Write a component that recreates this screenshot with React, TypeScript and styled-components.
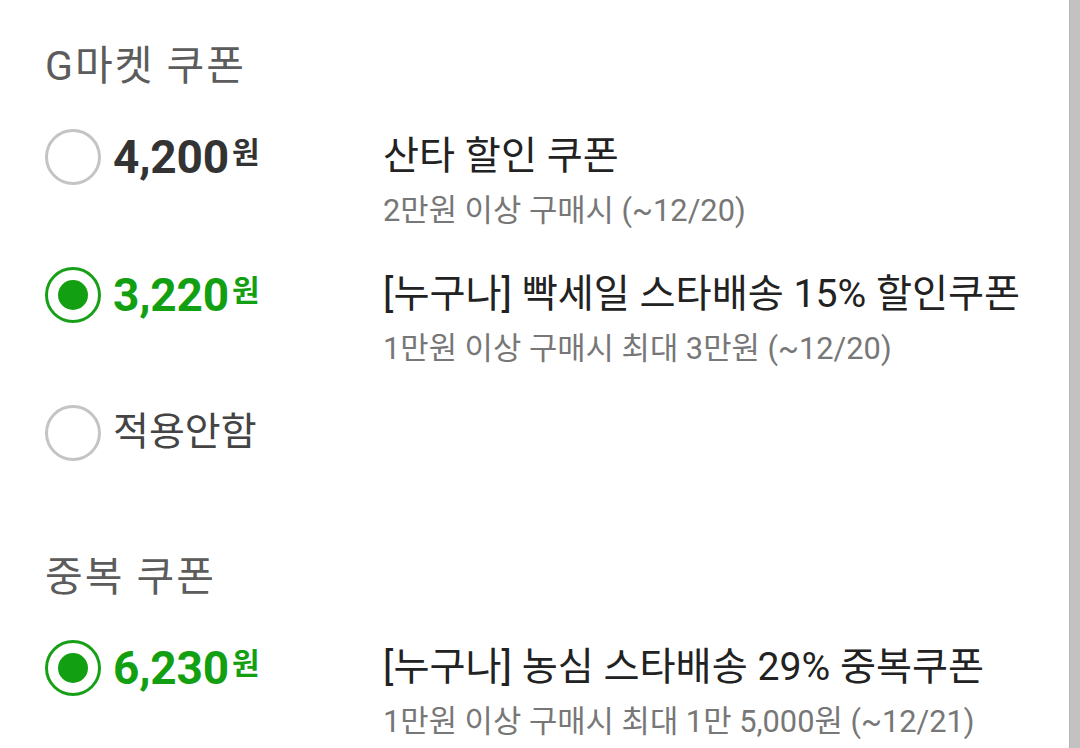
import styled, { createGlobalStyle } from "styled-components";

const GlobalStyle = createGlobalStyle`
    html, body {
        margin: 0;
        padding: 0;
        background: #ffffff;
    }
    body {
        font-family: Roboto, "Noto Sans CJK KR", sans-serif;
        -webkit-font-smoothing: antialiased;
    }
`;

const Screen = styled.div`
    display: flex;
    width: 1080px;
    height: 748px;
    overflow: hidden;
    background: #fff;
`;

const Content = styled.main`
    flex: 1;
    padding: 41px 0 0 45px;
`;

const Scrollbar = styled.div`
    width: 10px;
    border-left: 1px solid #b5b5b5;
    background: #c2c2c2;
`;

const Section = styled.section<{ $spaced?: boolean }>`
    display: flex;
    flex-direction: column;
    margin-top: ${({ $spaced }) => ($spaced ? "92px" : "0")};
`;

const Heading = styled.h2`
    margin: 0 0 38px;
    font-size: 41px;
    line-height: 50px;
    font-weight: 400;
    letter-spacing: 2px;
    color: #5c5c5c;
`;

const List = styled.div`
    display: flex;
    flex-direction: column;
    gap: 29px;
`;

const Row = styled.label`
    display: grid;
    grid-template-columns: 338px 1fr;
    align-items: start;
    cursor: pointer;
`;

const Choice = styled.div`
    display: flex;
    align-items: center;
    gap: 12px;
    height: 55px;
`;

const Radio = styled.span<{ $checked: boolean }>`
    box-sizing: border-box;
    display: flex;
    align-items: center;
    justify-content: center;
    flex: none;
    width: 56px;
    height: 56px;
    border-radius: 50%;
    border: 3px solid ${({ $checked }) => ($checked ? "#17a017" : "#c4c4c4")};

    &::after {
        content: "";
        display: ${({ $checked }) => ($checked ? "block" : "none")};
        width: 30px;
        height: 30px;
        border-radius: 50%;
        background: #12a012;
    }
`;

const Price = styled.span<{ $checked: boolean }>`
    display: flex;
    align-items: flex-start;
    font-weight: 700;
    color: ${({ $checked }) => ($checked ? "#12a012" : "#333333")};
`;

const Amount = styled.span`
    font-size: 46px;
    line-height: 46px;
    letter-spacing: -0.2px;
`;

const Unit = styled.span`
    font-size: 30px;
    line-height: 30px;
    margin: 4px 0 0 3px;
`;

const NoneLabel = styled.span`
    font-size: 39px;
    line-height: 55px;
    color: #444;
`;

const Info = styled.div`
    display: flex;
    flex-direction: column;
`;

const Title = styled.div`
    font-size: 39.2px;
    line-height: 55px;
    color: #222;
    white-space: nowrap;
`;

const Condition = styled.div`
    font-size: 30.8px;
    line-height: 54px;
    color: #777;
    white-space: nowrap;
`;

type Coupon = {
    amount: string;
    title: string;
    condition: string;
    checked: boolean;
};

const gmarketCoupons: Coupon[] = [
    { amount: "4,200", title: "산타 할인 쿠폰", condition: "2만원 이상 구매시 (~12/20)", checked: false },
    { amount: "3,220", title: "[누구나] 빡세일 스타배송 15% 할인쿠폰", condition: "1만원 이상 구매시 최대 3만원 (~12/20)", checked: true },
];

const extraCoupons: Coupon[] = [
    { amount: "6,230", title: "[누구나] 농심 스타배송 29% 중복쿠폰", condition: "1만원 이상 구매시 최대 1만 5,000원 (~12/21)", checked: true },
];

const CouponRow = ({ coupon }: { coupon: Coupon }) => (
    <Row>
        <Choice>
            <Radio $checked={coupon.checked} />
            <Price $checked={coupon.checked}>
                <Amount>{coupon.amount}</Amount>
                <Unit>원</Unit>
            </Price>
        </Choice>
        <Info>
            <Title>{coupon.title}</Title>
            <Condition>{coupon.condition}</Condition>
        </Info>
    </Row>
);

const App = (): JSX.Element => {
    return (
        <Screen>
            <GlobalStyle />
            <Content>
                <Section>
                    <Heading>G마켓 쿠폰</Heading>
                    <List>
                        {gmarketCoupons.map((c) => (
                            <CouponRow key={c.title} coupon={c} />
                        ))}
                        <Row>
                            <Choice>
                                <Radio $checked={false} />
                                <NoneLabel>적용안함</NoneLabel>
                            </Choice>
                        </Row>
                    </List>
                </Section>

                <Section $spaced>
                    <Heading>중복 쿠폰</Heading>
                    <List>
                        {extraCoupons.map((c) => (
                            <CouponRow key={c.title} coupon={c} />
                        ))}
                    </List>
                </Section>
            </Content>
            <Scrollbar />
        </Screen>
    );
};

export default App;
